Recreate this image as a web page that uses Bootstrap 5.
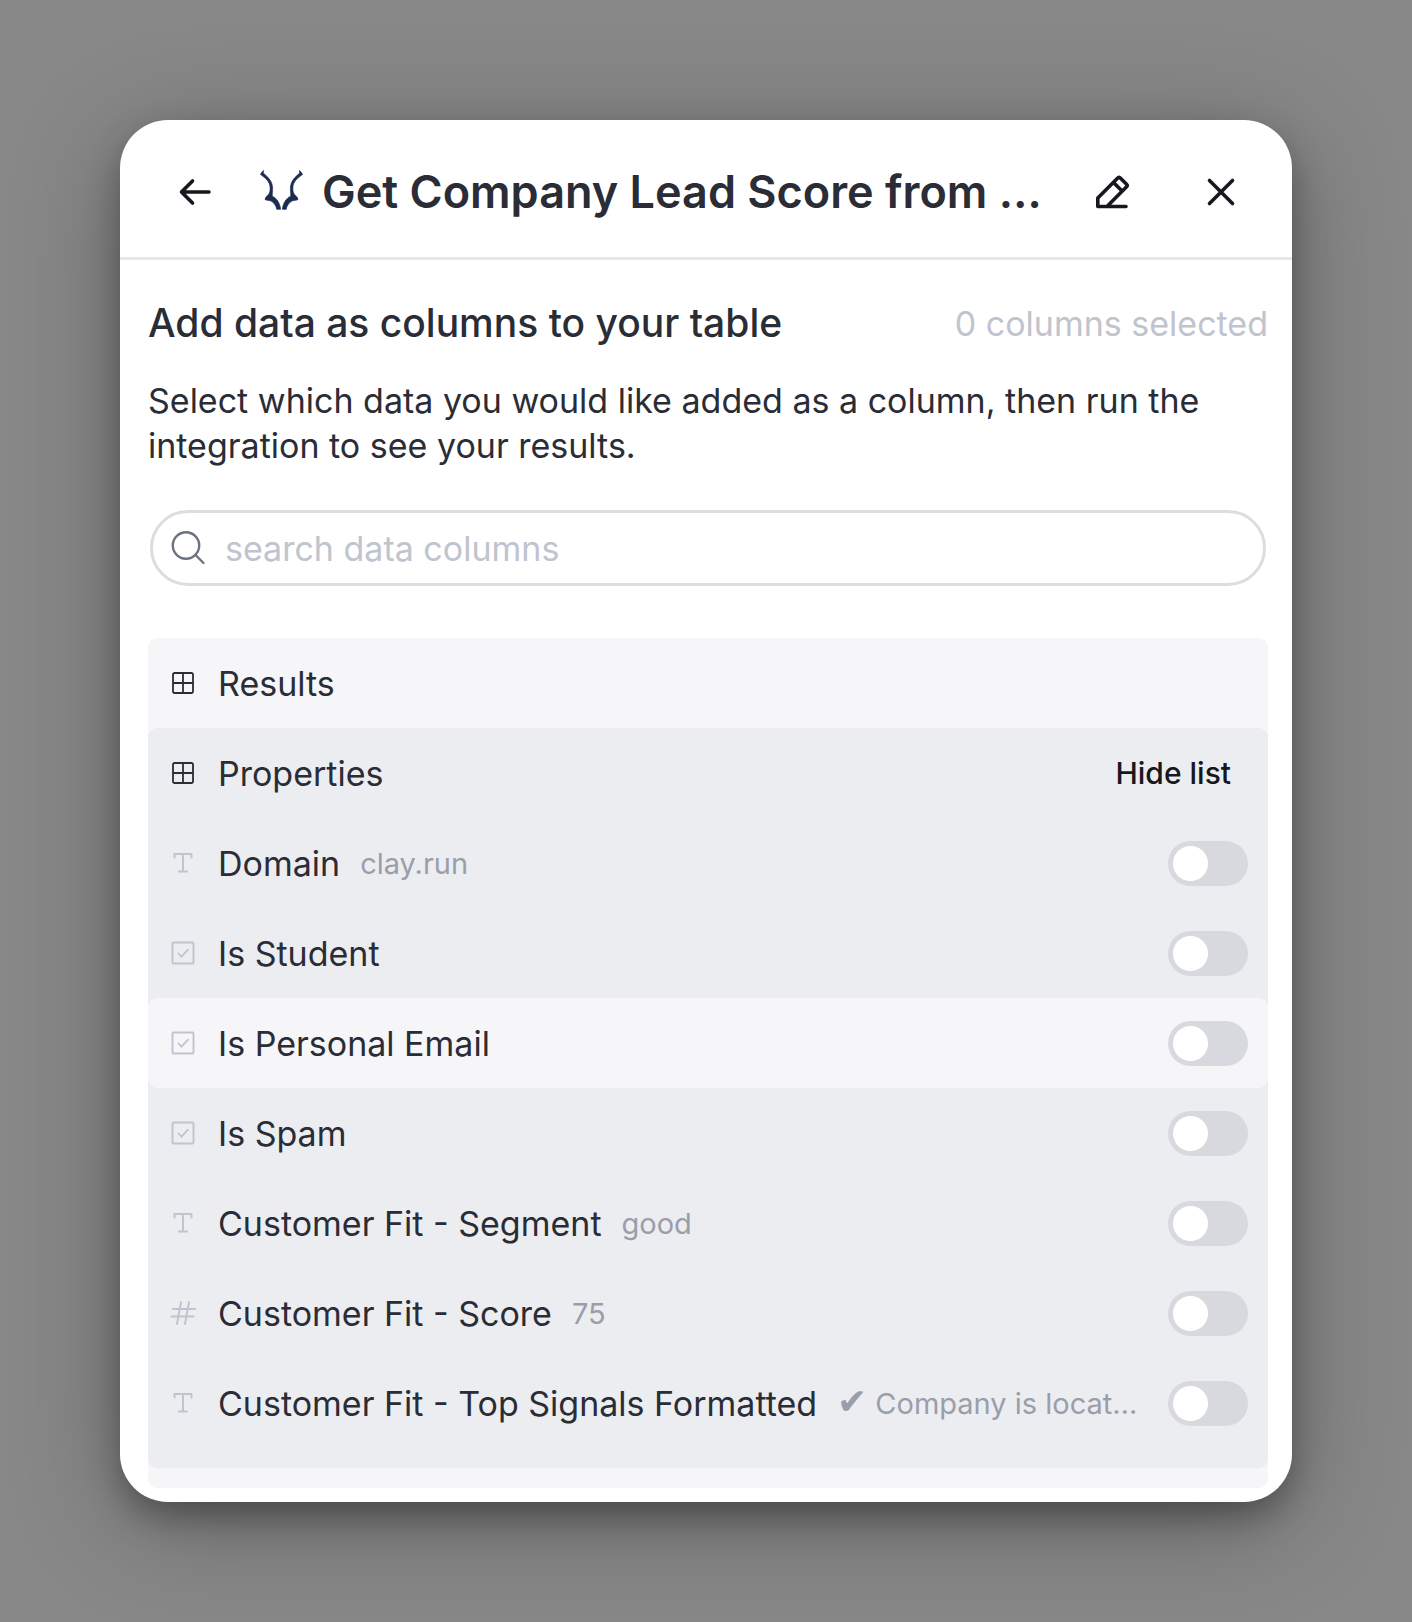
<!DOCTYPE html>
<html lang="en">
<head>
<meta charset="utf-8">
<meta name="viewport" content="width=device-width, initial-scale=1">
<title>Add data as columns</title>
<link href="https://cdn.jsdelivr.net/npm/bootstrap@5.3.0/dist/css/bootstrap.min.css" rel="stylesheet">
<style>
  body { background: #888888; color: #2a2c36; font-family: Inter, "Liberation Sans", sans-serif; font-size: 34px; line-height: 45px; }
  .backdrop-area { padding: 120px; }
  .panel { border-radius: 48px; box-shadow: 0 16px 36px -4px rgba(0,0,0,.36), 0 20px 110px rgba(0,0,0,.28); }
  .panel-head { padding: 45px 44px 38px 48px; border-bottom: 3px solid #e6e7eb; }
  .panel-title { font-size: 45px; line-height: 54px; font-weight: 600; }
  .icon-btn { width: 54px; height: 54px; color: #16181d; }
  .close-btn { margin-left: 55px; }
  .logo { width: 44px; height: 44px; margin: 0 18px 0 38px; }
  .panel-main { padding: 39px 24px 14px 28px; }
  .main-title { font-size: 39px; line-height: 48px; font-weight: 500; }
  .faint { color: #c0c4ce; }
  .intro { margin: 31px 0 42px; }
  .search { height: 76px; margin: 0 2px 52px; padding: 0 18px; gap: 18px; border: 3px solid #dcdde2; }
  .search input { outline: 0; color: inherit; }
  .search input::placeholder { color: #c0c4ce; opacity: 1; }
  .results { background: #f6f6f8; border-radius: 9px; padding-bottom: 20px; }
  .properties { background: #ecedf1; border-radius: 9px; padding-bottom: 20px; }
  .line { height: 90px; padding: 0 20px; gap: 20px; border-radius: 9px; }
  .line.active { background: #f6f6f8; }
  .line svg { color: #c0c4ce; }
  .line svg.dark { color: #2a2c36; }
  .sample { font-size: 29px; color: #9a9eaa; }
  .tick { font-size: 36px; line-height: 29px; }
  .hide-btn { font-size: 30px; font-weight: 500; color: #16181d; padding-right: 17px; }
  .form-check-input.toggle { width: 80px; height: 45px; margin: 0 0 0 8px; border: 0; border-radius: 23px; background: #d8d9df radial-gradient(circle at center, #fff 17px, transparent 18px) 0 0 / 45px 45px no-repeat; }
  .form-check-input.toggle:checked { background-color: #4a6cf7; background-position: 35px 0; }
</style>
<script src="https://cdn.jsdelivr.net/npm/bootstrap@5.3.0/dist/js/bootstrap.bundle.min.js"></script>
</head>
<body>
<svg class="d-none" aria-hidden="true">
  <symbol id="i-grid" viewBox="0 0 30 30"><path d="M6.500 5h17a1.500 1.500 0 0 1 1.500 1.500v17a1.500 1.500 0 0 1-1.500 1.500h-17a1.500 1.500 0 0 1-1.500-1.500v-17a1.500 1.500 0 0 1 1.500-1.500zM15 5v20M5 15h20" fill="none" stroke="currentColor" stroke-width="1.800"/></symbol>
  <symbol id="i-text" viewBox="0 0 30 30"><path d="M6.500 9.500V6h17v3.500M15 6v17.500M11 23.500h8" fill="none" stroke="currentColor" stroke-width="2" stroke-linecap="round" stroke-linejoin="round"/></symbol>
  <symbol id="i-check" viewBox="0 0 30 30"><rect x="4.500" y="4.500" width="21" height="21" rx="1" fill="none" stroke="currentColor" stroke-width="1.900"/><path d="M10.500 15.500l3 3.200 6.500-7" fill="none" stroke="currentColor" stroke-width="1.800" stroke-linecap="round"/></symbol>
  <symbol id="i-hash" viewBox="0 0 30 30"><path d="M5 11h22M3.500 18.500h22M13 4l-4 22M21 4l-4 22" fill="none" stroke="currentColor" stroke-width="2" stroke-linecap="round"/></symbol>
</svg>
<div class="backdrop-area min-vh-100">
  <section class="panel bg-white">
    <header class="panel-head d-flex align-items-center">
      <button class="btn icon-btn border-0 p-0 flex-shrink-0 d-flex align-items-center justify-content-center" type="button" aria-label="Back">
        <svg width="34" height="34" viewBox="0 0 34 34" fill="none" stroke="currentColor" stroke-width="3.600" stroke-linecap="round" stroke-linejoin="round"><path d="M31 17H3.500M14.500 6L3.500 17l11 11"/></svg>
      </button>
      <svg class="logo flex-shrink-0" viewBox="0 0 44 44" fill="#1c2b52" stroke="#1c2b52" stroke-width=".7" aria-hidden="true">
        <path id="horn" d="M3.600 0.500L3.200 3C7 6.500 12.600 10.500 12.600 18.500C12.600 21.500 12 24.500 12.300 26.200C16.500 28 20 33 20.600 39.300H16.800C16.400 36 13.500 32 10.500 30.800C8.500 30 6 30.500 5 29.400C5.500 27 7.300 25.600 8.500 24.500C10 22.500 10.300 20 10.100 17.500C9.900 11.500 5.500 8 0.500 4.500Q1.500 2.200 3.600 .5Z"/>
        <use href="#horn" transform="matrix(-1 0 0 1 43 0)"/>
      </svg>
      <h1 class="panel-title m-0 flex-grow-1 text-truncate">Get Company Lead Score from …</h1>
      <button class="btn icon-btn border-0 p-0 flex-shrink-0 d-flex align-items-center justify-content-center" type="button" aria-label="Rename">
        <svg width="36" height="36" viewBox="0 0 36 36" fill="none" stroke="currentColor" stroke-width="3.600" stroke-linecap="round" stroke-linejoin="round"><path d="M32 32.500H3.800V24L24 3.800a1.500 1.500 0 0 1 2 0l6.800 6.800a1.500 1.500 0 0 1 0 2L13.500 32M19.500 8.500l8.500 8.500"/></svg>
      </button>
      <button class="btn icon-btn close-btn border-0 p-0 flex-shrink-0 d-flex align-items-center justify-content-center" type="button" aria-label="Close">
        <svg width="30" height="30" viewBox="0 0 30 30" fill="none" stroke="currentColor" stroke-width="3.600" stroke-linecap="round"><path d="M3.500 3.500l23 23M26.500 3.500l-23 23"/></svg>
      </button>
    </header>
    <div class="panel-main">
      <div class="d-flex align-items-center justify-content-between">
        <h2 class="main-title m-0">Add data as columns to your table</h2>
        <span class="faint text-nowrap">0 columns selected</span>
      </div>
      <p class="intro">Select which data you would like added as a column, then run the integration to see your results.</p>
      <label class="search d-flex align-items-center rounded-pill">
        <svg class="flex-shrink-0" width="36" height="36" viewBox="0 0 36 36" fill="none" stroke="#6b7280" stroke-width="2.400" stroke-linecap="round"><circle cx="15" cy="15.500" r="13.200"/><path d="M24.500 25l8 8"/></svg>
        <input class="border-0 bg-transparent p-0 flex-grow-1" type="text" placeholder="search data columns" aria-label="search data columns">
      </label>
      <div class="results">
        <div class="line d-flex align-items-center"><svg class="dark" width="30" height="30"><use href="#i-grid"/></svg><span>Results</span></div>
        <div class="properties">
          <div class="line d-flex align-items-center"><svg class="dark" width="30" height="30"><use href="#i-grid"/></svg><span>Properties</span><button class="hide-btn btn border-0 py-0 ps-0 ms-auto" type="button">Hide list</button></div>
          <div class="line d-flex align-items-center"><svg width="30" height="30"><use href="#i-text"/></svg><label for="c1">Domain</label><span class="sample">clay.run</span><input class="form-check-input toggle ms-auto" type="checkbox" role="switch" id="c1"></div>
          <div class="line d-flex align-items-center"><svg width="30" height="30"><use href="#i-check"/></svg><label for="c2">Is Student</label><input class="form-check-input toggle ms-auto" type="checkbox" role="switch" id="c2"></div>
          <div class="line active d-flex align-items-center"><svg width="30" height="30"><use href="#i-check"/></svg><label for="c3">Is Personal Email</label><input class="form-check-input toggle ms-auto" type="checkbox" role="switch" id="c3"></div>
          <div class="line d-flex align-items-center"><svg width="30" height="30"><use href="#i-check"/></svg><label for="c4">Is Spam</label><input class="form-check-input toggle ms-auto" type="checkbox" role="switch" id="c4"></div>
          <div class="line d-flex align-items-center"><svg width="30" height="30"><use href="#i-text"/></svg><label for="c5">Customer Fit - Segment</label><span class="sample">good</span><input class="form-check-input toggle ms-auto" type="checkbox" role="switch" id="c5"></div>
          <div class="line d-flex align-items-center"><svg width="30" height="30"><use href="#i-hash"/></svg><label for="c6">Customer Fit - Score</label><span class="sample">75</span><input class="form-check-input toggle ms-auto" type="checkbox" role="switch" id="c6"></div>
          <div class="line d-flex align-items-center"><svg width="30" height="30"><use href="#i-text"/></svg><label for="c7">Customer Fit - Top Signals Formatted</label><span class="sample"><span class="tick">✔</span> Company is locat…</span><input class="form-check-input toggle ms-auto" type="checkbox" role="switch" id="c7"></div>
        </div>
      </div>
    </div>
  </section>
</div>
</body>
</html>
